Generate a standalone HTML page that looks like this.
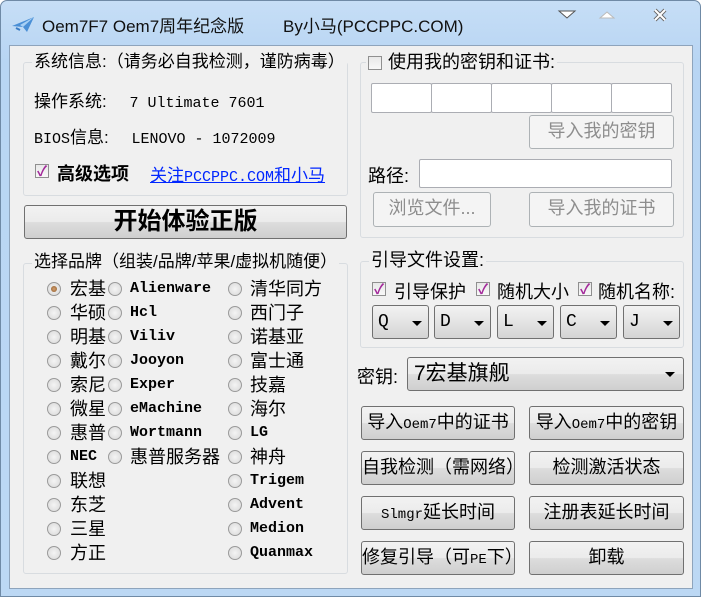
<!DOCTYPE html>
<html><head><meta charset="utf-8"><style>
*{box-sizing:border-box;margin:0;padding:0}
body{width:701px;height:597px;background:#fff;position:relative;overflow:hidden;font-family:"Liberation Sans","Noto Sans CJK SC",sans-serif;font-size:17px;color:#000}
.frame{position:absolute;left:0;top:0;width:701px;height:597px;background:linear-gradient(#c6def6,#b8d5f3 60px,#bcd8f4);border:1px solid #6f8aa6;border-radius:7px 7px 0 0}
.client{position:absolute;left:9px;top:45px;width:684px;height:544px;background:#f0f0f0;border:1px solid #8ea4bc}
.a{position:absolute;white-space:nowrap}
.grp{position:absolute;border:1px solid #d8dce0;border-radius:3px}
.gt{position:absolute;background:#f0f0f0;padding:0 2px;line-height:18px;white-space:nowrap}
.btn{position:absolute;border:1px solid #707070;border-radius:3px;background:linear-gradient(#f2f2f2 0,#ebebeb 50%,#dddddd 51%,#cfcfcf);text-align:center;white-space:nowrap}
.dis{border-color:#adb2b5;background:#f4f4f4;color:#8d8d8d}
.tb{position:absolute;background:#fff;border:1px solid #abadb3;border-radius:2px}
.mono{font-family:"Liberation Mono","DejaVu Sans Mono","Noto Sans CJK SC",monospace}
.rad{position:absolute;width:14px;height:14px;border-radius:50%;border:1px solid #9a9a9a;background:radial-gradient(circle,#f4f4f4,#d8d8d8)}
.rad.on::after{content:"";position:absolute;left:3px;top:3px;width:6px;height:6px;border-radius:50%;background:radial-gradient(circle,#d6a070,#8a5a2a)}
.rl{position:absolute;font-size:18px;line-height:20px;white-space:nowrap}
.cb{position:absolute;width:14px;height:14px;border:1px solid #8f8f8f;background:linear-gradient(#e8e8e8,#f8f8f8)}
.cb.on::after{content:"✓";position:absolute;left:1px;top:-4px;font-size:14px;font-weight:bold;color:#a3289a}
.combo{position:absolute;top:305px;width:57px;height:34px;border:1px solid #707070;border-radius:3px;background:linear-gradient(#f2f2f2,#e4e4e4 50%,#d4d4d4)}
.combo span{position:absolute;left:5px;top:6px;font-size:18px}
.arr{position:absolute;width:0;height:0;border-left:5px solid transparent;border-right:5px solid transparent;border-top:5px solid #000}
.b18{font-size:18px;line-height:31px}
</style></head><body>
<div class="frame"></div>
<svg class="a" style="left:11px;top:15px" width="24" height="18" viewBox="0 0 24 18"><path d="M1 11 L23 2 L16 17 L12 12 Z" fill="#4a8fd6"/><path d="M12 12 L23 2 L9 10 Z" fill="#a8d0f4"/><path d="M5 13 L9 15" stroke="#3a7cc4" stroke-width="2"/></svg>
<div class="a" style="left:42px;top:12px;font-size:17px;color:#111">Oem7F7 Oem7周年纪念版</div>
<div class="a" style="left:283px;top:12px;font-size:17px;color:#111">By小马(PCCPPC.COM)</div>
<svg class="a" style="left:557px;top:9px" width="20" height="12"><path d="M2 2 L18 2 L10 9 Z" fill="#fff" stroke="#555"/></svg>
<svg class="a" style="left:597px;top:9px" width="20" height="12"><path d="M3 9 L17 9 L10 3 Z" fill="#fff" stroke="#bbb"/></svg>
<svg class="a" style="left:652px;top:7px" width="16" height="16"><path d="M3 3 L13 13 M13 3 L3 13" stroke="#666" stroke-width="4"/><path d="M3 3 L13 13 M13 3 L3 13" stroke="#fff" stroke-width="2"/></svg>
<div class="client"></div>

<div class="grp" style="left:23px;top:62px;width:325px;height:134px"></div>
<div class="gt" style="left:32px;top:53px">系统信息:（请务必自我检测，谨防病毒）</div>
<div class="a" style="left:34px;top:87px">操作系统: <span class="mono" style="font-size:15px">&nbsp;&nbsp;7 Ultimate 7601</span></div>
<div class="a" style="left:34px;top:123px"><span class="mono" style="font-size:15px">BIOS</span>信息: <span class="mono" style="font-size:15px">&nbsp;&nbsp;LENOVO - 1072009</span></div>
<div class="cb on" style="left:35px;top:164px"></div>
<div class="a" style="left:57px;top:160px;font-weight:bold;font-size:18px">高级选项</div>
<div class="a" style="left:150px;top:161px;color:#0026ff;text-decoration:underline">关注<span class="mono" style="font-size:15px">PCCPPC.COM</span>和小马</div>
<div class="btn" style="left:24px;top:205px;width:323px;height:34px;font-size:24px;font-weight:bold;line-height:31px">开始体验正版</div>

<div class="grp" style="left:23px;top:263px;width:325px;height:311px"></div>
<div class="gt" style="left:32px;top:253px">选择品牌（组装/品牌/苹果/虚拟机随便）</div>

<div class="rad on" style="left:47px;top:282px"></div><div class="rl" style="left:70px;top:279px">宏基</div>
<div class="rad" style="left:47px;top:306px"></div><div class="rl" style="left:70px;top:303px">华硕</div>
<div class="rad" style="left:47px;top:330px"></div><div class="rl" style="left:70px;top:327px">明基</div>
<div class="rad" style="left:47px;top:354px"></div><div class="rl" style="left:70px;top:351px">戴尔</div>
<div class="rad" style="left:47px;top:378px"></div><div class="rl" style="left:70px;top:375px">索尼</div>
<div class="rad" style="left:47px;top:402px"></div><div class="rl" style="left:70px;top:399px">微星</div>
<div class="rad" style="left:47px;top:426px"></div><div class="rl" style="left:70px;top:423px">惠普</div>
<div class="rad" style="left:47px;top:450px"></div><div class="rl mono" style="left:70px;top:447px;font-size:15px;font-weight:bold">NEC</div>
<div class="rad" style="left:47px;top:474px"></div><div class="rl" style="left:70px;top:471px">联想</div>
<div class="rad" style="left:47px;top:498px"></div><div class="rl" style="left:70px;top:495px">东芝</div>
<div class="rad" style="left:47px;top:522px"></div><div class="rl" style="left:70px;top:519px">三星</div>
<div class="rad" style="left:47px;top:546px"></div><div class="rl" style="left:70px;top:543px">方正</div>

<div class="rad" style="left:108px;top:282px"></div><div class="rl mono" style="left:130px;top:279px;font-size:15px;font-weight:bold">Alienware</div>
<div class="rad" style="left:108px;top:306px"></div><div class="rl mono" style="left:130px;top:303px;font-size:15px;font-weight:bold">Hcl</div>
<div class="rad" style="left:108px;top:330px"></div><div class="rl mono" style="left:130px;top:327px;font-size:15px;font-weight:bold">Viliv</div>
<div class="rad" style="left:108px;top:354px"></div><div class="rl mono" style="left:130px;top:351px;font-size:15px;font-weight:bold">Jooyon</div>
<div class="rad" style="left:108px;top:378px"></div><div class="rl mono" style="left:130px;top:375px;font-size:15px;font-weight:bold">Exper</div>
<div class="rad" style="left:108px;top:402px"></div><div class="rl mono" style="left:130px;top:399px;font-size:15px;font-weight:bold">eMachine</div>
<div class="rad" style="left:108px;top:426px"></div><div class="rl mono" style="left:130px;top:423px;font-size:15px;font-weight:bold">Wortmann</div>
<div class="rad" style="left:108px;top:450px"></div><div class="rl" style="left:130px;top:447px">惠普服务器</div>

<div class="rad" style="left:228px;top:282px"></div><div class="rl" style="left:250px;top:279px">清华同方</div>
<div class="rad" style="left:228px;top:306px"></div><div class="rl" style="left:250px;top:303px">西门子</div>
<div class="rad" style="left:228px;top:330px"></div><div class="rl" style="left:250px;top:327px">诺基亚</div>
<div class="rad" style="left:228px;top:354px"></div><div class="rl" style="left:250px;top:351px">富士通</div>
<div class="rad" style="left:228px;top:378px"></div><div class="rl" style="left:250px;top:375px">技嘉</div>
<div class="rad" style="left:228px;top:402px"></div><div class="rl" style="left:250px;top:399px">海尔</div>
<div class="rad" style="left:228px;top:426px"></div><div class="rl mono" style="left:250px;top:423px;font-size:15px;font-weight:bold">LG</div>
<div class="rad" style="left:228px;top:450px"></div><div class="rl" style="left:250px;top:447px">神舟</div>
<div class="rad" style="left:228px;top:474px"></div><div class="rl mono" style="left:250px;top:471px;font-size:15px;font-weight:bold">Trigem</div>
<div class="rad" style="left:228px;top:498px"></div><div class="rl mono" style="left:250px;top:495px;font-size:15px;font-weight:bold">Advent</div>
<div class="rad" style="left:228px;top:522px"></div><div class="rl mono" style="left:250px;top:519px;font-size:15px;font-weight:bold">Medion</div>
<div class="rad" style="left:228px;top:546px"></div><div class="rl mono" style="left:250px;top:543px;font-size:15px;font-weight:bold">Quanmax</div>

<div class="grp" style="left:360px;top:62px;width:324px;height:176px"></div>
<div class="gt" style="left:366px;top:53px;padding-left:22px;font-size:18px">使用我的密钥和证书:</div>
<div class="cb" style="left:368px;top:56px"></div>
<div class="tb" style="left:371px;top:83px;width:61px;height:30px"></div>
<div class="tb" style="left:431px;top:83px;width:61px;height:30px"></div>
<div class="tb" style="left:491px;top:83px;width:61px;height:30px"></div>
<div class="tb" style="left:551px;top:83px;width:61px;height:30px"></div>
<div class="tb" style="left:611px;top:83px;width:61px;height:30px"></div>
<div class="btn dis b18" style="left:529px;top:115px;width:145px;height:34px">导入我的密钥</div>
<div class="a" style="left:368px;top:162px;font-size:18px">路径:</div>
<div class="tb" style="left:419px;top:159px;width:253px;height:29px"></div>
<div class="btn dis b18" style="left:373px;top:192px;width:118px;height:35px">浏览文件...</div>
<div class="btn dis b18" style="left:529px;top:192px;width:145px;height:35px">导入我的证书</div>

<div class="grp" style="left:360px;top:261px;width:324px;height:87px"></div>
<div class="gt" style="left:369px;top:251px;font-size:18px">引导文件设置:</div>
<div class="cb on" style="left:372px;top:282px"></div><div class="a" style="left:394px;top:278px;font-size:18px">引导保护</div>
<div class="cb on" style="left:476px;top:282px"></div><div class="a" style="left:497px;top:278px;font-size:18px">随机大小</div>
<div class="cb on" style="left:578px;top:282px"></div><div class="a" style="left:598px;top:278px;font-size:18px">随机名称:</div>
<div class="combo mono" style="left:372px"><span>Q</span><div class="arr" style="left:39px;top:15px"></div></div>
<div class="combo mono" style="left:434px"><span>D</span><div class="arr" style="left:39px;top:15px"></div></div>
<div class="combo mono" style="left:497px"><span>L</span><div class="arr" style="left:39px;top:15px"></div></div>
<div class="combo mono" style="left:560px"><span>C</span><div class="arr" style="left:39px;top:15px"></div></div>
<div class="combo mono" style="left:623px"><span>J</span><div class="arr" style="left:39px;top:15px"></div></div>

<div class="a" style="left:357px;top:363px;font-size:18px">密钥:</div>
<div class="btn" style="left:407px;top:357px;width:277px;height:34px;text-align:left;padding-left:6px;line-height:31px;font-size:21px">7宏基旗舰<div class="arr" style="left:257px;top:14px"></div></div>

<div class="btn b18" style="left:361px;top:406px;width:154px;height:34px">导入<span class="mono" style="font-size:14px">Oem7</span>中的证书</div>
<div class="btn b18" style="left:529px;top:406px;width:155px;height:34px">导入<span class="mono" style="font-size:14px">Oem7</span>中的密钥</div>
<div class="btn b18" style="left:361px;top:451px;width:154px;height:34px">自我检测（需网络）</div>
<div class="btn b18" style="left:529px;top:451px;width:155px;height:34px">检测激活状态</div>
<div class="btn b18" style="left:361px;top:496px;width:154px;height:34px"><span class="mono" style="font-size:14px">Slmgr</span>延长时间</div>
<div class="btn b18" style="left:529px;top:496px;width:155px;height:34px">注册表延长时间</div>
<div class="btn b18" style="left:361px;top:541px;width:154px;height:34px">修复引导（可<span class="mono" style="font-size:14px">PE</span>下）</div>
<div class="btn b18" style="left:529px;top:541px;width:155px;height:34px">卸载</div>
</body></html>
